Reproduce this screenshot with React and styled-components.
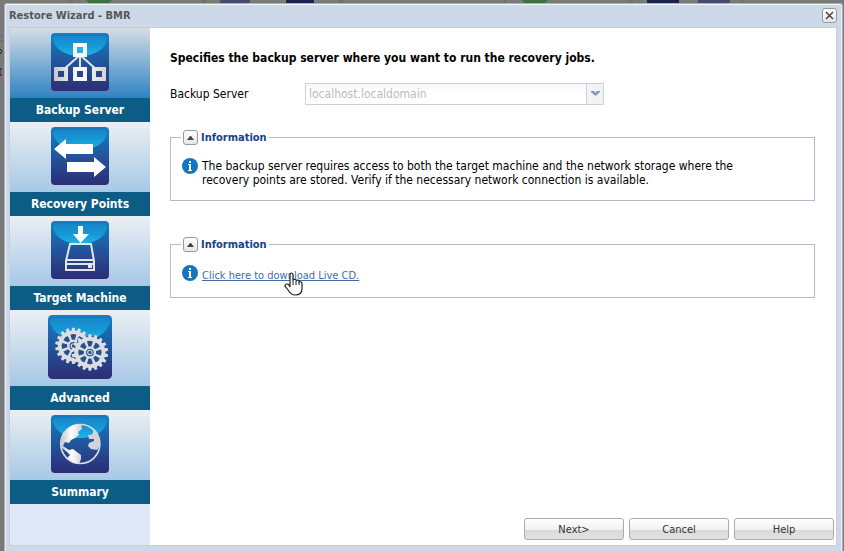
import React from 'react'
import styled, { createGlobalStyle } from 'styled-components'

const theme = {
  font: "Tahoma, 'DejaVu Sans Condensed', 'Noto Sans', sans-serif",
  color: {
    frame: '#cdd9e8',
    frameLine: '#a2b1c5',
    body: '#ffffff',
    side: '#dfe8f6',
    label: '#0c5c86',
    fieldset: '#b5b8c8',
    legend: '#15428b',
    link: '#416da3',
  },
}

const GlobalStyle = createGlobalStyle`
  * {
    box-sizing: border-box;
  }
  body {
    margin: 0;
    font-family: ${theme.font};
    font-size: 12px;
    color: #000;
  }
  button, select {
    font-family: inherit;
    font-size: 12px;
  }
`

const Page = styled.div`
  position: relative;
  display: flex;
  height: 100vh;
  min-height: 520px;
  padding: 3px 1px 0 4px;
  background: #7a7a7a;
  overflow: hidden;
`

const Backdrop = styled.svg`
  position: absolute;
  top: 0;
  left: 0;
`

const Window = styled.section`
  position: relative;
  flex: 1;
  display: flex;
  flex-direction: column;
  padding: 0 5px 5px 4px;
  border: 1px solid ${theme.color.frameLine};
  border-bottom: 0;
  border-radius: 3px 3px 0 0;
  box-shadow: inset 0 1px #f2f6fb, inset 1px 0 #e6edf6, inset -1px 0 #e6edf6;
  background: ${theme.color.frame};
`

const TitleBar = styled.header`
  display: flex;
  align-items: center;
  justify-content: space-between;
  height: 23px;
`

const Title = styled.h1`
  margin: 0;
  font-size: 11px;
  line-height: 16px;
  color: #555;
`

const ToolButton = styled.button`
  display: flex;
  align-items: center;
  justify-content: center;
  width: 15px;
  height: 15px;
  padding: 0;
  border: 1px solid #999;
  border-radius: 3px;
  background: linear-gradient(#fff, #e6e6e6);
`

const Body = styled.div`
  flex: 1;
  display: flex;
  border: 1px solid #cbced1;
  background: ${theme.color.body};
`

const Sidebar = styled.nav`
  flex: none;
  width: 140px;
  background: ${theme.color.side};
`

const Step = styled.button`
  display: block;
  width: 100%;
  padding: 0;
  border: 0;
  background: none;
`

const StepArt = styled.span`
  display: block;
  padding: 5px 0 7px;
  background: ${props =>
    props.$active
      ? 'linear-gradient(#d5dde6, #2e83c3)'
      : 'linear-gradient(#ebeff3, #a6c8e7)'};
`

const StepIcon = styled.svg`
  display: block;
  margin: 0 auto;
`

const StepLabel = styled.span`
  display: block;
  background: ${theme.color.label};
  color: #fff;
  font-weight: bold;
  line-height: 24px;
`

const Main = styled.main`
  flex: 1;
  display: flex;
  flex-direction: column;
  padding: 20px 21px 5px 20px;
`

const Heading = styled.h2`
  margin: 0 0 15px;
  font-size: 12px;
  line-height: 20px;
`

const Field = styled.div`
  display: flex;
  align-items: center;
  margin-bottom: 25px;
`

const Label = styled.label`
  width: 135px;
  line-height: 20px;
`

const SelectBox = styled.div`
  position: relative;
  width: 299px;
`

const Select = styled.select`
  appearance: none;
  display: block;
  width: 100%;
  height: 22px;
  padding: 0 20px 0 3px;
  border: 1px solid #d0d0dc;
  border-radius: 0;
  background: linear-gradient(#f5f6f6, #fff 8px);
  color: #bbb;
  opacity: 1;
`

const Trigger = styled.span`
  position: absolute;
  top: 1px;
  right: 1px;
  display: flex;
  align-items: center;
  justify-content: center;
  width: 17px;
  height: 20px;
  border-left: 1px solid #d0d0dc;
  background: #f3f3f5;
  pointer-events: none;
`

const Fieldset = styled.fieldset`
  min-width: 0;
  margin: 0 0 36px;
  padding: 13px 10px;
  border: 1px solid ${theme.color.fieldset};
`

const Legend = styled.legend`
  display: flex;
  align-items: center;
  gap: 3px;
  padding: 0 2px;
  color: ${theme.color.legend};
  font-size: 11px;
  font-weight: bold;
  line-height: 15px;
`

const Note = styled.div`
  display: flex;
  align-items: flex-start;
  gap: 4px;
  padding-left: 1px;
`

const NoteText = styled.p`
  max-width: 540px;
  margin: 0;
  padding-top: 1px;
  line-height: 14px;
`

const LinkWrap = styled.div`
  position: relative;
  padding-top: 2px;
  line-height: 16px;
`

const Link = styled.a`
  color: ${theme.color.link};
  font-size: 11px;
`

const Pointer = styled.svg`
  position: absolute;
  top: 7px;
  left: 82px;
`

const Footer = styled.footer`
  display: flex;
  justify-content: flex-end;
  gap: 5px;
  margin: auto -19px 0 0;
`

const Button = styled.button`
  width: 100px;
  height: 22px;
  padding: 0;
  border: 1px solid #aaa;
  border-radius: 3px;
  background: linear-gradient(#fff, #f0f0f0 55%, #dadada 56%, #e2e2e2);
  color: #333;
  font-size: 11px;
`

const Tile = ({ id, size = 58, children }) => (
  <StepIcon width={size} height={size} viewBox="0 0 58 58" aria-hidden="true">
    <defs>
      <linearGradient id={`${id}-bg`} x1="0" y1="0" x2="0" y2="1">
        <stop offset="0" stopColor="#1480c4" />
        <stop offset="0.5" stopColor="#21559c" />
        <stop offset="1" stopColor="#2c2d75" />
      </linearGradient>
      <linearGradient id={`${id}-shine`} x1="0" y1="0" x2="0" y2="1">
        <stop offset="0" stopColor="#1b86c8" />
        <stop offset="0.5" stopColor="#1499d8" />
        <stop offset="1" stopColor="#25b2e8" />
      </linearGradient>
      <linearGradient id={`${id}-metal`} x1="0" y1="0" x2="1" y2="0">
        <stop offset="0" stopColor="#c4c6ca" />
        <stop offset="0.5" stopColor="#fff" />
        <stop offset="1" stopColor="#d2d3d6" />
      </linearGradient>
    </defs>
    <rect width="58" height="58" rx="4" fill={`url(#${id}-bg)`} />
    <path
      d="M2 6Q2 3 6 3H52Q56 3 56 6C55 16 43 23 29 23S3 16 2 6Z"
      fill={`url(#${id}-shine)`}
    />
    {children}
  </StepIcon>
)

const ServerIcon = () => (
  <Tile id="server">
    <path d="M29 22L12 37M29 22V37M29 22L46 37" stroke="#e3e5ea" strokeWidth="2" />
    <path
      d="M22 10h14v14H22ZM3 34h14v14H3ZM22 34h14v14H22ZM41 34h14v14H41Z"
      fill="url(#server-metal)"
    />
    <path d="M26 14h6v6h-6z" fill="#25b4e8" />
    <path d="M7 38h6v6H7zM26 38h6v6h-6zM45 38h6v6h-6z" fill="#2c4389" />
  </Tile>
)

const ArrowsIcon = () => (
  <Tile id="arrows">
    <path d="M3 22L15 12V17H42V27H15V32Z" fill="#fff" />
    <path d="M55 40L43 30V35H16V45H43V50Z" fill="#fff" />
  </Tile>
)

const DiskIcon = () => (
  <Tile id="disk">
    <path d="M27 5h5v8h6l-8.500 9L22 13h5z" fill="#fff" />
    <path d="M19 23H40L43 40V49H15V40Z" fill="none" stroke="#e4e4ea" strokeWidth="2" />
    <path d="M15 39H43M15 43H43" stroke="#e4e4ea" strokeWidth="2" />
    <path d="M37 44h4v3h-4z" fill="#e4e4ea" />
  </Tile>
)

const TEETH = Array.from({ length: 18 }, (_, i) => i * 20)
const HOLES = Array.from({ length: 8 }, (_, i) => i * 45)

const Gear = ({ cx, cy }) => (
  <g transform={`translate(${cx} ${cy})`}>
    {TEETH.map(a => (
      <path key={a} d="M-1.900 -12L-1.200 -16.500H1.200L1.900 -12Z" fill="#dddde0" transform={`rotate(${a})`} />
    ))}
    <circle r="14" fill="#dedee2" />
    {HOLES.map(a => (
      <path key={a} d="M-1.300 -5.500L-2.700 -10Q0 -11.500 2.700 -10L1.300 -5.500Z" fill="#27508f" transform={`rotate(${a})`} />
    ))}
    <circle r="3" fill="#dedee2" stroke="#27508f" />
    <circle r="1.500" fill="#27508f" />
  </g>
)

const GearsIcon = () => (
  <Tile id="gears" size={64}>
    <Gear cx={23} cy={28} />
    <circle cx="38" cy="34" r="15" fill="#24589f" />
    <Gear cx={38} cy={34} />
  </Tile>
)

const GlobeIcon = () => (
  <Tile id="globe">
    <circle cx="29.300" cy="29" r="19.500" fill="none" stroke="#d9dce2" strokeWidth="1.700" />
    <path
      d="M10 29L11 22L16 14L22 10L30 9L31 14L27 17L28 20L24 23L20 25L18 28L14 27L12 31L18 35L22 34L26 37L30 40L30 44L28 49L22 47L16 43L19 40L16 37L11 33Z"
      fill="url(#globe-metal)"
    />
    <path
      d="M37 20L40 20L42 18L42 13L46 17L49 24L49 30L46 35L40 34L37 31L38 28L43 26L43 24L38 24Z"
      fill="#d3d4d9"
    />
  </Tile>
)

const InfoIcon = () => (
  <svg width="16" height="16" viewBox="0 0 16 16" aria-hidden="true">
    <circle cx="8" cy="8" r="8" fill="#1476be" />
    <path d="M7 3h2v2H7zM6 6h3v6h1v1H6v-1h1V7H6z" fill="#fff" />
  </svg>
)

const steps = [
  { name: 'Backup Server', Icon: ServerIcon },
  { name: 'Recovery Points', Icon: ArrowsIcon },
  { name: 'Target Machine', Icon: DiskIcon },
  { name: 'Advanced', Icon: GearsIcon },
  { name: 'Summary', Icon: GlobeIcon },
]

const InfoPanel = ({ children }) => (
  <Fieldset>
    <Legend>
      <ToolButton type="button" aria-label="Collapse">
        <svg width="7" height="4" viewBox="0 0 7 4">
          <path d="M0 4L3 0h1l3 4z" fill="#444" />
        </svg>
      </ToolButton>
      Information
    </Legend>
    <Note>
      <InfoIcon />
      {children}
    </Note>
  </Fieldset>
)

export default () => (
  <>
    <GlobalStyle />
    <Page>
      <Backdrop width="844" height="80" aria-hidden="true">
        <path d="M86 0h26l-3 3H89zM522 0h26l-3 3h-20z" fill="#3b7340" />
        <path d="M220 0h30v3h-30zM698 0h32v3h-32z" fill="#454a72" />
        <path d="M286 0h28v3h-28zM647 0h32v3h-32z" fill="#1b2150" />
        <path d="M69 0v3M72 0v3M203 0v3M205 0v3M340 0v3M342 0v3M505 0v3M629 0v3M632 0v3M742 0v3M0 36h3M0 41h3" stroke="#676767" />
        <path d="M0 49l2 2-2 3M2 69h-2v6h2" fill="none" stroke="#222" />
      </Backdrop>
      <Window>
        <TitleBar>
          <Title>Restore Wizard - BMR</Title>
          <ToolButton type="button" aria-label="Close">
            <svg width="9" height="9" viewBox="0 0 9 9">
              <path d="M1 1l7 7M8 1L1 8" stroke="#444" strokeWidth="1.500" />
            </svg>
          </ToolButton>
        </TitleBar>
        <Body>
          <Sidebar>
            {steps.map(({ name, Icon }, i) => (
              <Step key={name} type="button">
                <StepArt $active={i === 0}>
                  <Icon />
                </StepArt>
                <StepLabel>{name}</StepLabel>
              </Step>
            ))}
          </Sidebar>
          <Main>
            <Heading>Specifies the backup server where you want to run the recovery jobs.</Heading>
            <Field>
              <Label htmlFor="server-select">Backup Server</Label>
              <SelectBox>
                <Select id="server-select" disabled>
                  <option>localhost.localdomain</option>
                </Select>
                <Trigger>
                  <svg width="9" height="6" viewBox="0 0 9 6">
                    <path d="M0 0h3l1.500 2L6 0h3v1L4.500 5 0 1z" fill="#8094bd" />
                  </svg>
                </Trigger>
              </SelectBox>
            </Field>
            <InfoPanel>
              <NoteText>
                The backup server requires access to both the target machine and the network storage where the
                recovery points are stored. Verify if the necessary network connection is available.
              </NoteText>
            </InfoPanel>
            <InfoPanel>
              <LinkWrap>
                <Link href="#live-cd">Click here to download Live CD.</Link>
                <Pointer width="20" height="24" viewBox="0 0 20 24" aria-hidden="true">
                  <path
                    d="M6 15V3Q6 1 7.500 1T9 3V9Q9 7 11 7.500T12 9Q14 7 15 9V10Q18 9 18 12V17Q18 23 11 23Q7 23 4 18L1 14Q1 12 3 12Q5 12 6 15Z"
                    fill="#fff"
                    stroke="#222"
                    strokeWidth="1.200"
                  />
                  <path d="M9 9v4M12 9v4M15 10v3" stroke="#222" />
                </Pointer>
              </LinkWrap>
            </InfoPanel>
            <Footer>
              <Button type="button">Next&gt;</Button>
              <Button type="button">Cancel</Button>
              <Button type="button">Help</Button>
            </Footer>
          </Main>
        </Body>
      </Window>
    </Page>
  </>
)
